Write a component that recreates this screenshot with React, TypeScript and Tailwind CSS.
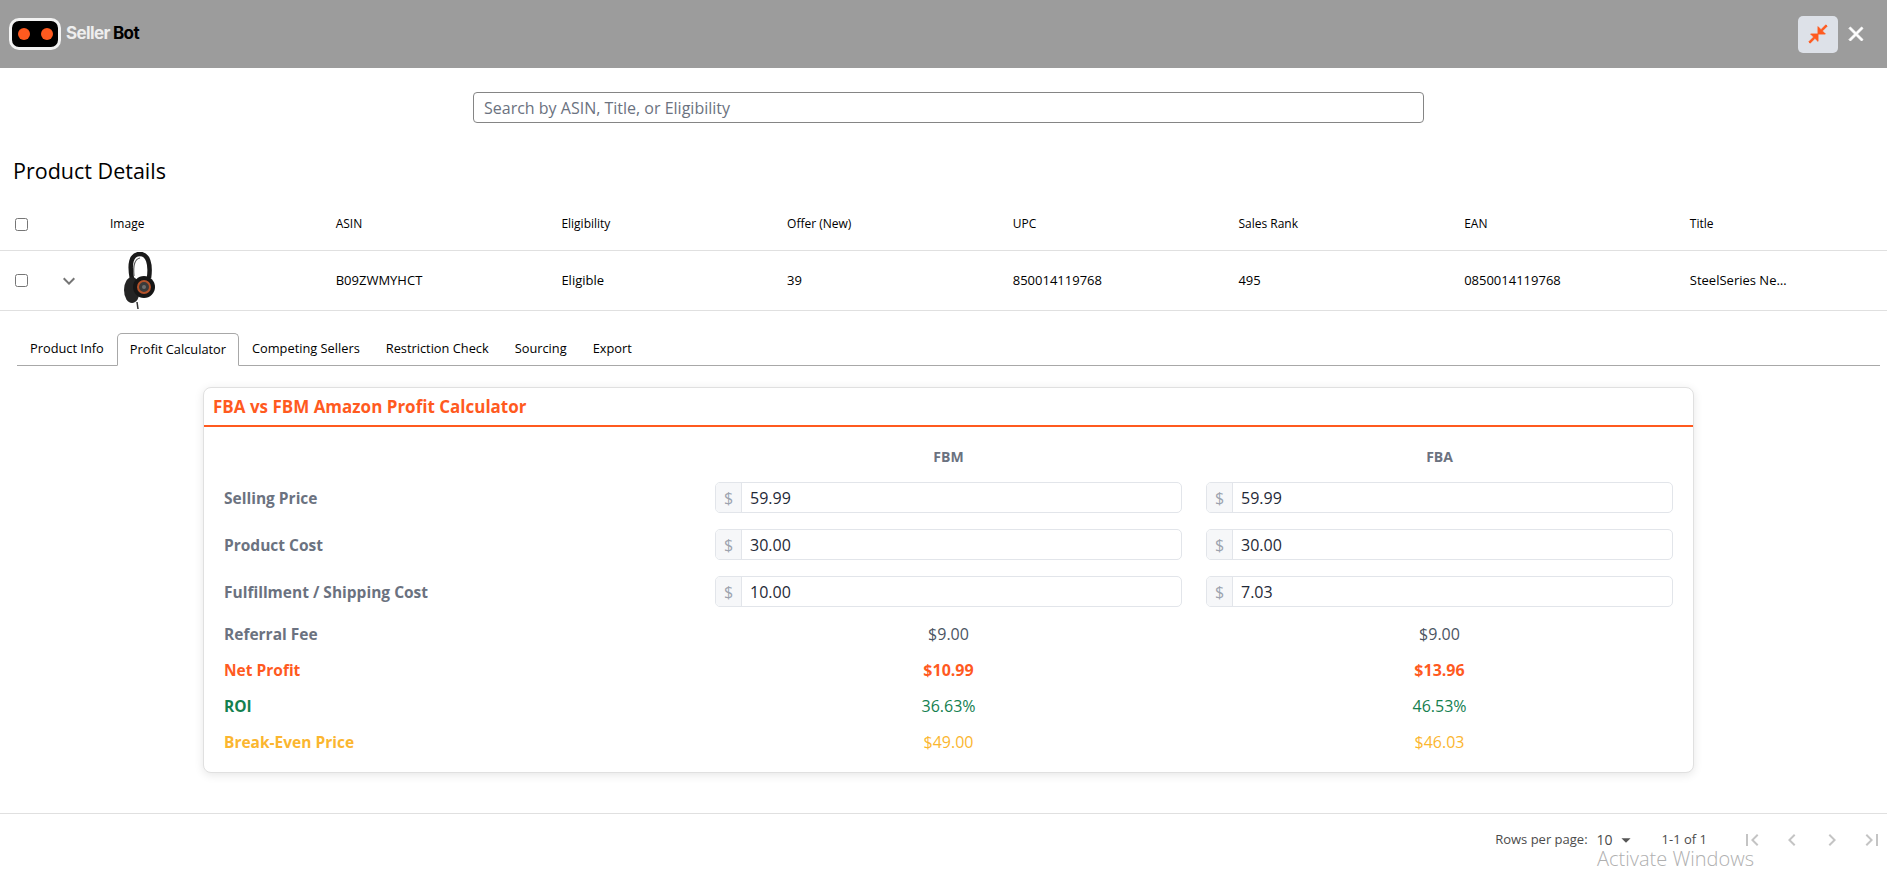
import { ReactNode } from 'react'

const columns = ['ASIN', 'Eligibility', 'Offer (New)', 'UPC', 'Sales Rank', 'EAN', 'Title']
const rowValues = ['B09ZWMYHCT', 'Eligible', '39', '850014119768', '495', '0850014119768', 'SteelSeries Ne…']
const tabs = ['Product Info', 'Profit Calculator', 'Competing Sellers', 'Restriction Check', 'Sourcing', 'Export']

const inputs = [
  { label: 'Selling Price', fbm: '59.99', fba: '59.99' },
  { label: 'Product Cost', fbm: '30.00', fba: '30.00' },
  { label: 'Fulfillment / Shipping Cost', fbm: '10.00', fba: '7.03' },
]

const results = [
  { label: 'Referral Fee', fbm: '$9.00', fba: '$9.00', labelClass: 'text-[#6b7280]', valueClass: 'text-[#4b5563]' },
  { label: 'Net Profit', fbm: '$10.99', fba: '$13.96', labelClass: 'text-[#ff5a1f]', valueClass: 'font-bold text-[#ff5a1f]' },
  { label: 'ROI', fbm: '36.63%', fba: '46.53%', labelClass: 'text-[#14804f]', valueClass: 'text-[#14804f]' },
  { label: 'Break-Even Price', fbm: '$49.00', fba: '$46.03', labelClass: 'text-[#fbb62f]', valueClass: 'text-[#fbb62f]' },
]

function MuiIcon({ d, className }: { d: string; className?: string }) {
  return (
    <svg viewBox="0 0 24 24" fill="currentColor" className={className}>
      <path d={d} />
    </svg>
  )
}

function Checkbox() {
  return <input type="checkbox" className="h-[13px] w-[13px] appearance-none rounded-[2.5px] border border-[#767676] bg-white" />
}

function Logo() {
  return (
    <div className="flex items-center gap-[5px]">
      <div className="flex h-[32px] w-[52px] items-center justify-center gap-[11px] rounded-[10px] border-[3px] border-[#f2f2f2] bg-black">
        <span className="h-[12px] w-[12px] rounded-full bg-[#ff5a1f]" />
        <span className="h-[12px] w-[12px] rounded-full bg-[#ff5a1f]" />
      </div>
      <div className="font-['Inter',sans-serif] text-[17px] font-bold tracking-[-0.6px]">
        <span className="text-[#eeeeee]">Seller</span>
        <span className="ml-[3px] text-black">Bot</span>
      </div>
    </div>
  )
}

function Headphones() {
  return (
    <svg viewBox="0 0 32 57" className="h-[57px] w-[32px]">
      <path d="M9 27 C6 12 8 2 17 2 C25 2 28 12 26 26" fill="none" stroke="#1a1a1a" strokeWidth="4.5" />
      <path d="M11 24 C10 14 12 7 17 6" fill="none" stroke="#5a5a5a" strokeWidth="1.2" />
      <ellipse cx="9" cy="38" rx="8" ry="13" fill="#242424" />
      <circle cx="21" cy="35" r="11" fill="#161616" />
      <circle cx="21" cy="35" r="6" fill="#3a3a3a" stroke="#b4522a" strokeWidth="2" />
      <circle cx="21" cy="35" r="2" fill="#6e6e6e" />
      <path d="M14 50 L15 57" stroke="#333" strokeWidth="1.5" />
    </svg>
  )
}

function PriceInput({ value }: { value: string }) {
  return (
    <div className="flex h-[31px] overflow-hidden rounded-[5px] border border-[#e2e5ea] bg-white">
      <span className="flex w-[26px] items-center justify-center border-r border-[#e2e5ea] bg-[#f6f7f9] text-[16px] text-[#9ca3af]">$</span>
      <input readOnly value={value} className="min-w-0 flex-1 pl-[8px] text-[16px] text-[#1f2937] outline-none" />
    </div>
  )
}

function CalcRow({ className, children }: { className: string; children: ReactNode }) {
  return <div className={`grid grid-cols-[467px_467px_467px] items-center gap-x-[24px] ${className}`}>{children}</div>
}

function ProfitCalculator() {
  return (
    <div className="ml-[203px] mt-[21px] h-[386px] w-[1491px] rounded-lg border border-[#e0e0e0] bg-white shadow-[0_2px_10px_rgba(0,0,0,0.1)]">
      <div className="flex h-[39px] items-center border-b-2 border-[#ff5a1f] pl-[9px] text-[17px] font-bold text-[#ff5a1f]">
        FBA vs FBM Amazon Profit Calculator
      </div>
      <div className="px-[20px] pt-[19px]">
        <CalcRow className="mb-[16px] h-[20px] text-center text-[14px] font-bold text-[#6b7280]">
          <div />
          <div>FBM</div>
          <div>FBA</div>
        </CalcRow>
        {inputs.map(row => (
          <CalcRow key={row.label} className="mb-[16px]">
            <div className="pt-[3px] text-[15.5px] font-bold text-[#6b7280]">{row.label}</div>
            <PriceInput value={row.fbm} />
            <PriceInput value={row.fba} />
          </CalcRow>
        ))}
        <div className="-mt-[7px]">
          {results.map(row => (
            <CalcRow key={row.label} className="h-[36px]">
              <div className={`pt-[1px] text-[15.5px] font-bold ${row.labelClass}`}>{row.label}</div>
              <div className={`text-center text-[16px] ${row.valueClass}`}>{row.fbm}</div>
              <div className={`text-center text-[16px] ${row.valueClass}`}>{row.fba}</div>
            </CalcRow>
          ))}
        </div>
      </div>
    </div>
  )
}

export default function App() {
  return (
    <div className="relative flex h-[871px] w-[1887px] flex-col overflow-hidden bg-white font-['Open_Sans',sans-serif] text-black">
      <header className="flex h-[68px] shrink-0 items-center justify-between bg-[#9c9c9c] pl-[9px] pr-[19px]">
        <Logo />
        <div className="flex items-center gap-[6px]">
          <button className="flex h-[37px] w-[40px] items-center justify-center rounded-[5px] bg-[#dde1e8]">
            <MuiIcon
              className="h-[22px] w-[22px] stroke-[#ff5a1f] stroke-[1px] text-[#ff5a1f]"
              d="M22 3.41l-5.29 5.3L20 12h-8V4l3.29 3.29L20.59 2 22 3.41zM3.41 22l5.3-5.29L12 20v-8H4l3.29 3.29L2 20.59 3.41 22z"
            />
          </button>
          <MuiIcon
            className="h-[24px] w-[24px] stroke-white stroke-[1px] text-white"
            d="M19 6.41 17.59 5 12 10.59 6.41 5 5 6.41 10.59 12 5 17.59 6.41 19 12 13.41 17.59 19 19 17.59 13.41 12z"
          />
        </div>
      </header>

      <div className="mt-[24px] flex justify-center pl-[10px]">
        <input
          placeholder="Search by ASIN, Title, or Eligibility"
          className="h-[31px] w-[951px] rounded-[4px] border border-[#858585] px-[10px] text-[16px] outline-none placeholder:text-[#6b7280]"
        />
      </div>

      <h2 className="mt-[33px] h-[30px] pl-[13px] text-[21.5px] leading-[30px]">Product Details</h2>

      <div className="mt-[12px] grid h-[53px] grid-cols-[94px_repeat(8,225.7px)] items-center border-b border-[#e0e0e0] text-[12px]">
        <div className="flex pl-[15px]">
          <Checkbox />
        </div>
        <div className="pl-[16px]">Image</div>
        {columns.map(name => (
          <div key={name} className="pl-[16px]">
            {name}
          </div>
        ))}
      </div>

      <div className="grid h-[60px] grid-cols-[94px_repeat(8,225.7px)] items-center border-b border-[#e0e0e0] text-[13px]">
        <div className="flex items-center pl-[15px]">
          <Checkbox />
          <MuiIcon className="ml-[29px] h-[24px] w-[24px] text-[#757575]" d="M7.41 8.59 12 13.17l4.59-4.58L18 10l-6 6-6-6 1.41-1.41z" />
        </div>
        <div className="pl-[29px]">
          <Headphones />
        </div>
        {rowValues.map(value => (
          <div key={value} className="pl-[16px]">
            {value}
          </div>
        ))}
      </div>

      <div className="ml-[17px] mr-[7px] mt-[22px] flex h-[33px] border-b border-[#a8a8a8] text-[12.8px]">
        {tabs.map(tab => (
          <div
            key={tab}
            className={
              tab === 'Profit Calculator'
                ? '-mb-px flex items-center rounded-t-[5px] border border-b-white border-[#a8a8a8] bg-white px-[12px]'
                : 'flex items-center border border-transparent px-[12px]'
            }
          >
            {tab}
          </div>
        ))}
      </div>

      <ProfitCalculator />

      <footer className="mt-[40px] flex h-[57px] items-center justify-end border-t border-[#e0e0e0] pb-[5px] pr-[3px] text-[13px] leading-[15px] text-[#4b4b4b]">
        <span>Rows per page:</span>
        <span className="ml-[9px] text-[14px]">10</span>
        <MuiIcon className="ml-[2px] h-[22px] w-[22px] text-[#555]" d="m7 10 5 5 5-5z" />
        <span className="ml-[25px] mr-[33px] text-[13px]">1-1 of 1</span>
        <div className="flex gap-[16px] text-[#c4c4c4]">
          <MuiIcon className="h-[24px] w-[24px]" d="M18.41 16.59 13.82 12l4.59-4.59L17 6l-6 6 6 6zM6 6h2v12H6z" />
          <MuiIcon className="h-[24px] w-[24px]" d="M15.41 16.59 10.83 12l4.58-4.59L14 6l-6 6 6 6 1.41-1.41z" />
          <MuiIcon className="h-[24px] w-[24px]" d="M8.59 16.59 13.17 12 8.59 7.41 10 6l6 6-6 6-1.41-1.41z" />
          <MuiIcon className="h-[24px] w-[24px]" d="M5.59 7.41 10.18 12l-4.59 4.59L7 18l6-6-6-6zM16 6h2v12h-2z" />
        </div>
      </footer>

      <div className="absolute left-[1597px] top-[849px] text-[20px] font-light leading-[20px] text-[#b0b0b0]">Activate Windows</div>
    </div>
  )
}
